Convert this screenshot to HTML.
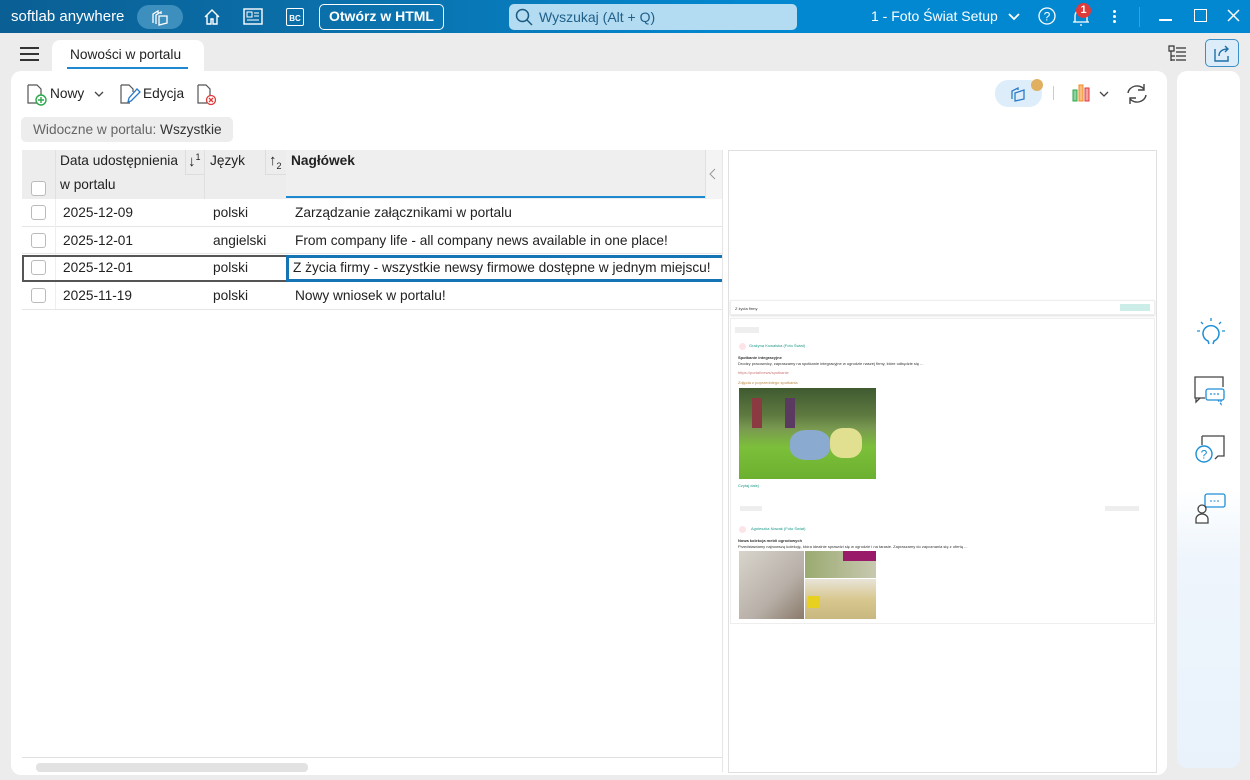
<!DOCTYPE html>
<html><head><meta charset="utf-8"><style>
*{box-sizing:border-box;margin:0;padding:0}
body{width:1250px;height:780px;overflow:hidden;background:#ececec;font-family:"Liberation Sans","Noto Sans CJK JP",sans-serif;font-size:14px;color:#222;position:relative}
.abs{position:absolute}
.top{left:0;top:0;width:1250px;height:33px;background:linear-gradient(90deg,#0a5f94 0%,#0b72ad 30%,#0288d1 60%,#0288d1 100%)}
.w{color:#fff}
svg{position:absolute;overflow:visible}
.cell{position:absolute;font-size:13.7px;color:#222;white-space:nowrap}
.hl{position:absolute;left:22px;width:700px;height:1px;background:#e6e6e6}
.cb{position:absolute;left:31px;width:15px;height:15px;border:1px solid #bbb;border-radius:3px;background:#fff}
.t{position:absolute;font-size:4px;line-height:5px;color:#333;white-space:nowrap}
</style></head><body>
<div class="abs top"></div>
<div class="abs w" style="left:11px;top:8px;font-size:15px">softlab anywhere</div>
<div class="abs" style="left:137px;top:5px;width:46px;height:24px;border-radius:12px;background:#3d8fbd"></div>
<svg style="left:150px;top:9px" width="20" height="18"><path d="M3 14V5l5-3v2M6 15V6l5-3v2M9 16V7h8v7l-8 2z" fill="none" stroke="#fff" stroke-width="1.3"/></svg>
<svg style="left:203px;top:8px" width="18" height="18"><path d="M2 9L9 2l7 7M4 7v9h4v-5h2v5h4V7" fill="none" stroke="#fff" stroke-width="1.4"/></svg>
<svg style="left:243px;top:8px" width="20" height="17"><rect x="1" y="1" width="18" height="15" fill="none" stroke="#fff" stroke-width="1.4"/><rect x="4" y="4" width="5" height="5" fill="none" stroke="#fff"/><path d="M11 5h5M11 8h5M4 12h12" stroke="#fff"/></svg>
<div class="abs" style="left:286px;top:8px;width:18px;height:18px;border:1.5px solid #fff;border-radius:2px;color:#fff;font-size:8px;font-weight:bold;text-align:center;line-height:20px">BC</div>
<div class="abs w" style="left:319px;top:4px;width:125px;height:26px;border:1.5px solid #fff;border-radius:5px;font-weight:bold;font-size:14px;text-align:center;line-height:23px">Otwórz w HTML</div>
<div class="abs" style="left:509px;top:4px;width:288px;height:26px;border-radius:5px;background:#b3dcf2"></div>
<svg style="left:515px;top:8px" width="18" height="18"><circle cx="7.5" cy="7.5" r="6" fill="none" stroke="#1a5a80" stroke-width="1.5"/><path d="M12 12l5 5" stroke="#1a5a80" stroke-width="1.5"/></svg>
<div class="abs" style="left:539px;top:9px;color:#1f5f88;font-size:14px">Wyszukaj (Alt + Q)</div>
<div class="abs w" style="left:871px;top:8px;font-size:14px">1 - Foto Świat Setup</div>
<svg style="left:1008px;top:13px" width="12" height="8"><path d="M1 1l5 5 5-5" fill="none" stroke="#fff" stroke-width="1.8"/></svg>
<svg style="left:1038px;top:7px" width="18" height="18"><circle cx="9" cy="9" r="8" fill="none" stroke="#fff" stroke-width="1.3"/><text x="9" y="13.5" font-size="12" fill="#fff" text-anchor="middle" font-family="Liberation Sans">?</text></svg>
<svg style="left:1072px;top:7px" width="18" height="20"><path d="M3 15V9a6 6 0 0112 0v6zM1 15h16M8 18h2" fill="none" stroke="#fff" stroke-width="1.3"/></svg>
<div class="abs" style="left:1076px;top:3px;width:15px;height:15px;border-radius:50%;background:#e03a3a;color:#fff;font-size:11px;font-weight:bold;text-align:center;line-height:15px">1</div>
<div class="abs" style="left:1113px;top:10px;width:3px;height:3px;background:#fff;border-radius:50%;box-shadow:0 5px #fff,0 10px #fff"></div>
<div class="abs" style="left:1139px;top:7px;width:1px;height:20px;background:#3aa0d8"></div>
<div class="abs" style="left:1159px;top:19px;width:13px;height:1.5px;background:#fff"></div>
<div class="abs" style="left:1194px;top:9px;width:13px;height:13px;border:1.5px solid #fff"></div>
<svg style="left:1227px;top:9px" width="13" height="13"><path d="M1 1l11 11M12 1L1 12" stroke="#fff" stroke-width="1.5"/></svg>

<!-- tab bar -->
<div class="abs" style="left:20px;top:47px;width:19px;height:2px;background:#333;box-shadow:0 6px #333,0 12px #333"></div>
<div class="abs" style="left:52px;top:40px;width:152px;height:32px;background:#fff;border-radius:8px 8px 0 0"></div>
<div class="abs" style="left:70px;top:47px;font-size:13.7px;color:#222">Nowości w portalu</div>
<div class="abs" style="left:67px;top:67px;width:121px;height:2px;background:#1e88d0"></div>
<svg style="left:1168px;top:45px" width="20" height="18"><path d="M1 1h5v5H1zM3 6v10M8 3h10M8 7h10M8 11h10M8 15h10M3 11h4M3 15h4" fill="none" stroke="#333" stroke-width="1.2"/></svg>
<div class="abs" style="left:1205px;top:39px;width:34px;height:28px;border:1px solid #3a8fc6;border-radius:5px;background:#dcecf8"></div>
<svg style="left:1212px;top:43px" width="20" height="20"><path d="M3 6v12h13v-5M7 13c0-5 4-7 9-7M13 3l3 3-3 3" fill="none" stroke="#1f6fa8" stroke-width="1.4"/></svg>

<!-- main panel -->
<div class="abs" style="left:11px;top:71px;width:1156px;height:704px;background:#fff;border-radius:10px"></div>
<div class="abs" style="left:1177px;top:71px;width:63px;height:697px;border-radius:10px;background:linear-gradient(180deg,#fff 0%,#fff 60%,#eef5fc 70%,#e9f2fb 100%)"></div>

<!-- toolbar -->
<svg style="left:26px;top:84px" width="22" height="22"><path d="M2 1h9l4 4v9M2 1v18h9" fill="none" stroke="#555" stroke-width="1.2"/><circle cx="15" cy="16" r="5" fill="#fff" stroke="#2aa84a" stroke-width="1.4"/><path d="M15 13v6M12 16h6" stroke="#2aa84a" stroke-width="1.4"/></svg>
<div class="abs" style="left:50px;top:86px;font-size:13.7px">Nowy</div>
<svg style="left:94px;top:91px" width="10" height="6"><path d="M1 1l4 4 4-4" fill="none" stroke="#444" stroke-width="1.3"/></svg>
<svg style="left:119px;top:83px" width="22" height="22"><path d="M2 2h8l4 4v3M2 2v18h9" fill="none" stroke="#555" stroke-width="1.2"/><path d="M9 19l1-4 8-9 3 3-9 9z" fill="none" stroke="#2b7bc7" stroke-width="1.3"/></svg>
<div class="abs" style="left:143px;top:86px;font-size:13.7px">Edycja</div>
<svg style="left:196px;top:83px" width="22" height="23"><path d="M2 2h8l4 4v7M2 2v18h9" fill="none" stroke="#555" stroke-width="1.2"/><circle cx="15" cy="17" r="4.5" fill="#fff" stroke="#e03a3a" stroke-width="1.3"/><path d="M13 15l4 4M17 15l-4 4" stroke="#e03a3a" stroke-width="1.3"/></svg>
<div class="abs" style="left:995px;top:80px;width:47px;height:27px;border-radius:13px;background:#ddeefa"></div>
<svg style="left:1009px;top:84px" width="20" height="20"><path d="M3 15V7l6-3v2M6 17V9l9-3v9l-9 2z" fill="none" stroke="#2b7bc7" stroke-width="1.3"/></svg>
<div class="abs" style="left:1031px;top:79px;width:12px;height:12px;border-radius:50%;background:#e0b060"></div>
<div class="abs" style="left:1053px;top:86px;width:1px;height:14px;background:#ccc"></div>
<svg style="left:1072px;top:83px" width="22" height="20"><rect x="1" y="7" width="4" height="11" fill="#8fd19e" stroke="#2aa84a"/><rect x="7" y="2" width="4" height="16" fill="#f8c080" stroke="#f08a24"/><rect x="13" y="5" width="4" height="13" fill="#f5a0a0" stroke="#e03a3a"/></svg>
<svg style="left:1099px;top:91px" width="10" height="6"><path d="M1 1l4 4 4-4" fill="none" stroke="#444" stroke-width="1.3"/></svg>
<svg style="left:1125px;top:83px" width="24" height="22"><path d="M3 10a9 8 0 0116-4M21 12a9 8 0 01-16 4M19 1v6h-6M5 21v-6h6" fill="none" stroke="#444" stroke-width="1.4"/></svg>

<div class="abs" style="left:21px;top:117px;width:212px;height:25px;border-radius:5px;background:#ededed"></div>
<div class="abs" style="left:33px;top:122px;font-size:13.7px;color:#666">Widoczne w portalu: <span style="color:#333">Wszystkie</span></div>

<!-- grid -->
<div class="abs" style="left:22px;top:150px;width:700px;height:49px;background:#ededed"></div>
<div class="abs" style="left:286px;top:150px;width:419px;height:48px;background:#efefef"></div>
<div class="abs" style="left:286px;top:196px;width:419px;height:2px;background:#1e88d0"></div>
<div class="abs" style="left:55px;top:150px;width:1px;height:49px;background:#e0e0e0"></div>
<div class="abs" style="left:204px;top:150px;width:1px;height:49px;background:#e0e0e0"></div>
<div class="abs" style="left:705px;top:150px;width:17px;height:49px;background:#f4f4f4;border-left:1px solid #e0e0e0"></div>
<svg style="left:709px;top:168px" width="8" height="12"><path d="M6 1L1 6l5 5" fill="none" stroke="#999"/></svg>
<div class="abs" style="left:185px;top:150px;width:19px;height:25px;border-left:1px solid #ddd;border-bottom:1px solid #ddd"></div>
<div class="abs" style="left:265px;top:150px;width:21px;height:25px;border-left:1px solid #ddd;border-bottom:1px solid #ddd"></div>
<div class="cell" style="left:60px;top:153px">Data udostępnienia</div>
<div class="cell" style="left:60px;top:177px">w portalu</div>
<div class="cell" style="left:188px;top:152px;font-size:15px">↓<sup style="font-size:9px">1</sup></div>
<div class="cell" style="left:210px;top:153px">Język</div>
<div class="cell" style="left:269px;top:152px;font-size:15px">↑<sub style="font-size:9px">2</sub></div>
<div class="cell" style="left:291px;top:153px;font-weight:bold">Nagłówek</div>
<div class="cb" style="top:181px"></div>

<div class="hl" style="top:226px"></div><div class="hl" style="top:253px"></div><div class="hl" style="top:281px"></div><div class="hl" style="top:309px"></div>
<div class="abs" style="left:55px;top:199px;width:1px;height:110px;background:#eee"></div>
<div class="cb" style="top:205px"></div><div class="cb" style="top:233px"></div><div class="cb" style="top:260px"></div><div class="cb" style="top:288px"></div>
<div class="cell" style="left:63px;top:205px">2025-12-09</div><div class="cell" style="left:213px;top:205px">polski</div><div class="cell" style="left:295px;top:205px">Zarządzanie załącznikami w portalu</div>
<div class="cell" style="left:63px;top:233px">2025-12-01</div><div class="cell" style="left:213px;top:233px">angielski</div><div class="cell" style="left:295px;top:233px">From company life - all company news available in one place!</div>
<div class="abs" style="left:22px;top:255px;width:264px;height:27px;border:2px solid #555;border-right:none"></div>
<div class="abs" style="left:286px;top:255px;width:436px;height:27px;border:3px solid #1574b5;border-right:none"></div>
<div class="cell" style="left:63px;top:260px">2025-12-01</div><div class="cell" style="left:213px;top:260px">polski</div><div class="cell" style="left:293px;top:260px">Z życia firmy - wszystkie newsy firmowe dostępne w jednym miejscu!</div>
<div class="cell" style="left:63px;top:288px">2025-11-19</div><div class="cell" style="left:213px;top:288px">polski</div><div class="cell" style="left:295px;top:288px">Nowy wniosek w portalu!</div>

<div class="abs" style="left:22px;top:757px;width:700px;height:1px;background:#e0e0e0"></div>
<div class="abs" style="left:36px;top:763px;width:272px;height:9px;border-radius:4px;background:#e2e2e2"></div>
<div class="abs" style="left:722px;top:150px;width:1px;height:622px;background:#e6e6e6"></div>

<!-- preview -->
<div class="abs" style="left:728px;top:150px;width:429px;height:623px;border:1px solid #e0e0e0;background:#fff"></div>
<div class="abs" style="left:730px;top:300px;width:425px;height:15px;background:#fff;border:1px solid #eee;box-shadow:0 1px 2px #ddd"></div>
<div class="t" style="left:735px;top:306px">Z życia firmy</div>
<div class="abs" style="left:1120px;top:304px;width:30px;height:7px;background:#cdeee8"></div>
<div class="abs" style="left:730px;top:318px;width:425px;height:306px;background:#fff;border:1px solid #eee"></div>
<div class="abs" style="left:735px;top:327px;width:24px;height:6px;background:#eee"></div>
<div class="abs" style="left:739px;top:343px;width:7px;height:7px;border-radius:50%;background:#fde4e8"></div>
<div class="t" style="left:749px;top:343px;color:#1a9a8a">Grażyna Kowalska (Foto Świat)</div>
<div class="t" style="left:738px;top:355px;font-weight:bold">Spotkanie integracyjne</div>
<div class="t" style="left:738px;top:361px">Drodzy pracownicy, zapraszamy na spotkanie integracyjne w ogrodzie naszej firmy, które odbędzie się ...</div>
<div class="t" style="left:738px;top:370px;color:#c77">https://portal/news/spotkanie</div>
<div class="t" style="left:738px;top:380px;color:#b84">Zdjęcia z poprzedniego spotkania</div>
<div class="abs" style="left:739px;top:388px;width:137px;height:91px;background:linear-gradient(180deg,#3f5a30 0%,#5f7a40 30%,#7a9a50 45%,#7cbf3a 65%,#6cb030 100%)"></div>
<div class="abs" style="left:752px;top:398px;width:10px;height:30px;background:#8a3a40"></div>
<div class="abs" style="left:785px;top:398px;width:10px;height:30px;background:#5a3a60"></div>
<div class="abs" style="left:790px;top:430px;width:40px;height:30px;background:#8aaad0;border-radius:40%"></div>
<div class="abs" style="left:830px;top:428px;width:32px;height:30px;background:#e0e090;border-radius:40%"></div>
<div class="t" style="left:738px;top:483px;color:#1a9a8a">Czytaj dalej</div>
<div class="abs" style="left:740px;top:506px;width:22px;height:5px;background:#eee"></div>
<div class="abs" style="left:1105px;top:506px;width:34px;height:5px;background:#eee"></div>
<div class="abs" style="left:739px;top:526px;width:7px;height:7px;border-radius:50%;background:#fde4e8"></div>
<div class="t" style="left:751px;top:526px;color:#1a9a8a">Agnieszka Nowak (Foto Świat)</div>
<div class="t" style="left:738px;top:538px;font-weight:bold">Nowa kolekcja mebli ogrodowych</div>
<div class="t" style="left:738px;top:544px">Przedstawiamy najnowszą kolekcję, która idealnie sprawdzi się w ogrodzie i na tarasie. Zapraszamy do zapoznania się z ofertą ...</div>
<div class="abs" style="left:739px;top:551px;width:65px;height:68px;background:linear-gradient(135deg,#d8d4cc,#b8b0a8 60%,#8a7a6a)"></div>
<div class="abs" style="left:805px;top:551px;width:71px;height:27px;background:linear-gradient(90deg,#9aaa70,#c8c8b0)"></div>
<div class="abs" style="left:843px;top:551px;width:33px;height:10px;background:#9a1a6a"></div>
<div class="abs" style="left:805px;top:579px;width:71px;height:40px;background:linear-gradient(180deg,#e8e4d8,#d8c890 50%,#c8b880)"></div>
<div class="abs" style="left:808px;top:596px;width:12px;height:12px;background:#e8d020"></div>

<!-- right sidebar icons -->
<svg style="left:1195px;top:317px" width="32" height="30"><path d="M16 1v3M6 5l2 2M26 5l-2 2M2 14h3M27 14h3" stroke="#1e8fd8" stroke-width="1.3"/><path d="M14 27l-1-3a8 8 0 116 0l-1 3" fill="none" stroke="#1e8fd8" stroke-width="1.5"/></svg>
<svg style="left:1193px;top:374px" width="34" height="32"><path d="M12 24H2V3h28v10" fill="none" stroke="#444" stroke-width="1.3"/><path d="M3 24v4l4-4" fill="none" stroke="#444" stroke-width="1.3"/><rect x="13" y="15" width="18" height="11" rx="2" fill="#fff" stroke="#1e8fd8" stroke-width="1.3"/><path d="M25 26l3 4v-4M17 20h10" stroke="#1e8fd8" stroke-width="1.3" stroke-dasharray="2 1.5" fill="none"/></svg>
<svg style="left:1194px;top:434px" width="34" height="32"><path d="M8 2h22v20h-6l-3 3M8 2v9" fill="none" stroke="#444" stroke-width="1.3"/><circle cx="10" cy="20" r="8" fill="#fff" stroke="#1e8fd8" stroke-width="1.4"/><text x="10" y="24.5" font-size="12" fill="#1e8fd8" text-anchor="middle" font-family="Liberation Sans">?</text></svg>
<svg style="left:1194px;top:493px" width="34" height="32"><rect x="11" y="1" width="20" height="13" rx="2" fill="none" stroke="#1e8fd8" stroke-width="1.3"/><path d="M16 8h10" stroke="#1e8fd8" stroke-dasharray="2 1.5"/><path d="M2 30v-4a6 5 0 0112 0v4zM8 20a4 4 0 100-8 4 4 0 000 8z" fill="#fff" stroke="#444" stroke-width="1.3"/></svg>
</body></html>
